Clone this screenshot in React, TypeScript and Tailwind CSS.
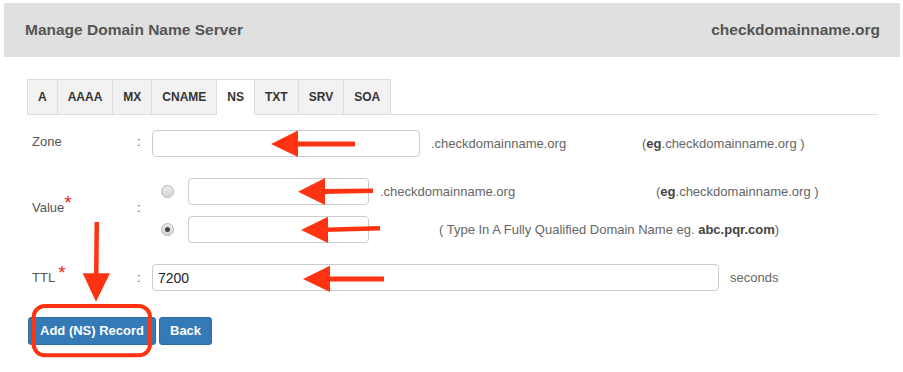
import React from "react";

const tabs = ["A", "AAAA", "MX", "CNAME", "NS", "TXT", "SRV", "SOA"];

function Radio({ checked }: { checked?: boolean }) {
  return (
    <span className="ml-[9px] flex h-[13px] w-[13px] shrink-0 items-center justify-center rounded-full border border-[#b5b5b5] bg-gradient-to-b from-[#ececec] to-[#d4d4d4]">
      {checked && <span className="h-[5px] w-[5px] rounded-full bg-[#444]" />}
    </span>
  );
}

export default function App() {
  const font = { fontFamily: '"Liberation Sans", Arial, sans-serif' };
  return (
    <div className="relative h-[372px] w-[903px] overflow-hidden bg-white" style={font}>
      {/* Header */}
      <div className="ml-[4px] mr-[3px] mt-[3px] flex h-[54px] items-center justify-between bg-[#dfe0df] pl-[21px] pr-[20px] text-[15.5px] font-bold text-[#555]">
        <span>Manage Domain Name Server</span>
        <span>checkdomainname.org</span>
      </div>

      <div className="pl-[27px] pr-[25px]">
        {/* Tabs */}
        <div className="mt-[22px] flex border-b border-[#dddddd]">
          {tabs.map((t, i) => (
            <div
              key={t}
              className={`-mb-px flex h-[36px] items-center border-t border-r border-[#dddddd] px-[10px] text-[12px] font-bold text-[#333] ${
                i === 0 ? "border-l" : ""
              } ${t === "NS" ? "border-b border-b-white bg-white" : "border-b border-b-[#dddddd] bg-[#f2f2f2]"}`}
            >
              {t}
            </div>
          ))}
        </div>

        {/* Zone row */}
        <div className="mt-[15px] flex items-start pl-[5px] text-[13px] text-[#555]">
          <div className="w-[105px] pt-[2px]">Zone</div>
          <div className="w-[15px] pt-[2px]">:</div>
          <div className="flex h-[27px] items-center">
            <input className="h-[27px] w-[268px] rounded-[4px] border border-[#cccccc] bg-white outline-none" />
            <span className="ml-[11px] w-[211px] text-[#666]">.checkdomainname.org</span>
            <span className="text-[#666]">
              (<b className="text-[#444]">eg</b>.checkdomainname.org )
            </span>
          </div>
        </div>

        {/* Value row */}
        <div className="mt-[21px] flex items-center pl-[5px] text-[13px] text-[#555]">
          <div className="-mt-[5px] w-[105px]">
            Value<span className="relative -top-[3px] text-[19px] leading-[10px] text-[#e8221b]">*</span>
          </div>
          <div className="-mt-[5px] w-[15px]">:</div>
          <div className="flex flex-col gap-[11px]">
            <div className="flex h-[27px] items-center">
              <Radio />
              <input className="ml-[14px] h-[27px] w-[181px] rounded-[4px] border border-[#cccccc] bg-white outline-none" />
              <span className="ml-[11px] w-[276px] text-[#666]">.checkdomainname.org</span>
              <span className="text-[#666]">
                (<b className="text-[#444]">eg</b>.checkdomainname.org )
              </span>
            </div>
            <div className="flex h-[27px] items-center">
              <Radio checked />
              <input className="ml-[14px] h-[27px] w-[181px] rounded-[4px] border border-[#cccccc] bg-white outline-none" />
              <span className="ml-[70px] text-[#666]">
                ( Type In A Fully Qualified Domain Name eg. <b className="text-[#444]">abc.pqr.com</b>)
              </span>
            </div>
          </div>
        </div>

        {/* TTL row */}
        <div className="mt-[21px] flex items-center pl-[5px] text-[13px] text-[#555]">
          <div className="w-[105px]">
            TTL <span className="relative -top-[3px] text-[19px] leading-[10px] text-[#e8221b]">*</span>
          </div>
          <div className="w-[15px]">:</div>
          <input
            defaultValue="7200"
            className="h-[27px] w-[567px] rounded-[4px] border border-[#cccccc] bg-white px-[5px] text-[14px] text-[#222] outline-none"
          />
          <span className="ml-[11px] text-[#666]">seconds</span>
        </div>

        {/* Buttons */}
        <div className="ml-[1px] mt-[26px] flex gap-[3px]">
          <button className="rounded-[3px] border border-[#2e6da4] bg-[#337ab7] px-[11px] py-[4px] text-[13px] font-bold leading-[18px] text-white">
            Add (NS) Record
          </button>
          <button className="rounded-[3px] border border-[#2e6da4] bg-[#337ab7] px-[10px] py-[4px] text-[13px] font-bold leading-[18px] text-white">
            Back
          </button>
        </div>
      </div>

      {/* Annotation overlay */}
      <svg className="pointer-events-none absolute left-0 top-0" width="903" height="372" viewBox="0 0 903 372">
        <g fill="#ff3311" stroke="none">
          <rect x="296" y="141.5" width="59" height="5" />
          <polygon points="271,144 298,130.5 298,157" />
          <polygon points="323,189 373,188.5 373,193 323,194" />
          <polygon points="298,191.7 325,178 325,205" />
          <polygon points="326,227.5 380,226 380,230.5 326,232" />
          <polygon points="301,230 328,216.7 328,243" />
          <rect x="328" y="276.5" width="56" height="5" />
          <polygon points="303,279 330,265.7 330,292" />
          <polygon points="94.5,222 99,222 98.5,276 94,276" />
          <polygon points="82.7,273.3 110,273.3 96,301.7" />
        </g>
        <rect x="33.7" y="306" width="116.3" height="49.3" rx="11" fill="none" stroke="#ff3311" strokeWidth="4" />
      </svg>
    </div>
  );
}
